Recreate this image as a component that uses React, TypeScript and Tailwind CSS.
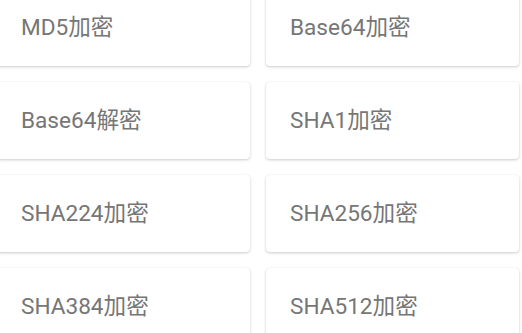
import React from 'react';

const items = [
  'MD5加密',
  'Base64加密',
  'Base64解密',
  'SHA1加密',
  'SHA224加密',
  'SHA256加密',
  'SHA384加密',
  'SHA512加密',
];

export default function App() {
  return (
    <div className="w-[522px] h-[333px] overflow-hidden bg-white">
      <div
        className="grid grid-cols-2 gap-x-4 gap-y-4 w-[522px] -mt-[11px] -ml-[3px]"
        style={{ fontFamily: 'Roboto, "Noto Sans CJK SC", sans-serif' }}
      >
        {items.map((label) => (
          <div
            key={label}
            className="h-[77px] flex items-center pl-[24px] pr-4 pt-[2px] bg-white rounded-[4px] shadow-[0_1px_3px_rgba(0,0,0,0.2),0_0_1px_rgba(0,0,0,0.08)]"
          >
            <span className="text-[22.6px] text-[#767676] leading-none">{label}</span>
          </div>
        ))}
      </div>
    </div>
  );
}
